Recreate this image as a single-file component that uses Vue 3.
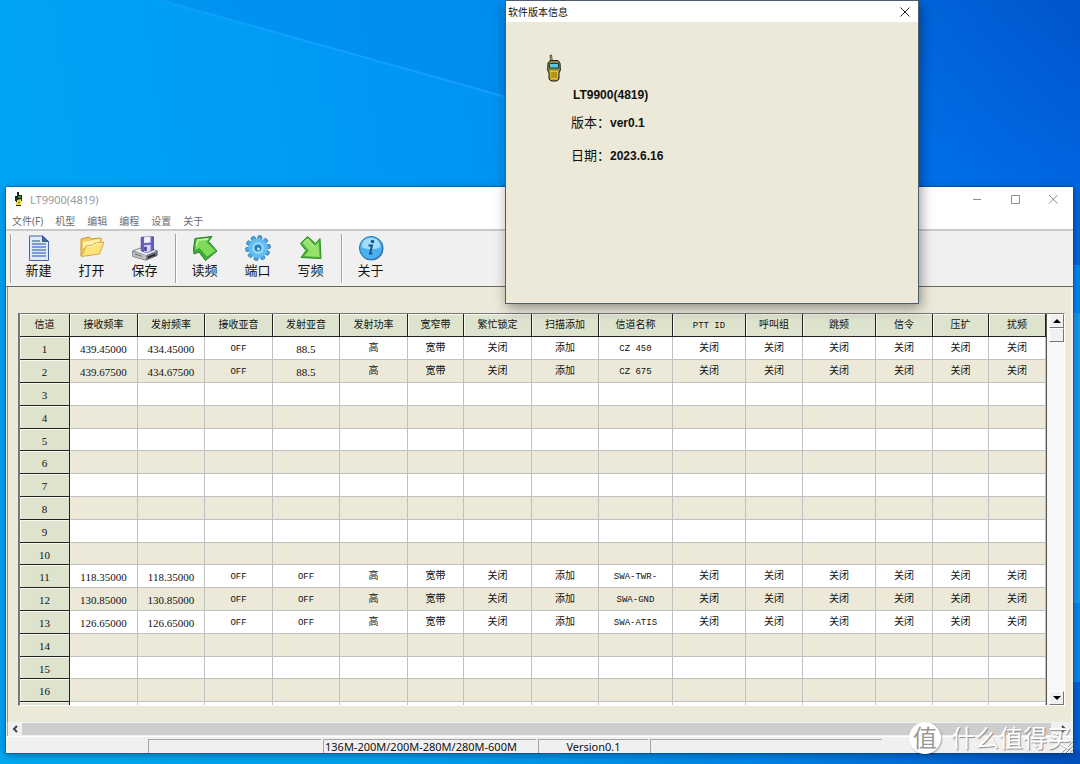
<script setup>
const menus = ['文件(F)', '机型', '编辑', '编程', '设置', '关于']

const toolGroups = [
  [
    { id: 'new', label: '新建' },
    { id: 'open', label: '打开' },
    { id: 'save', label: '保存' }
  ],
  [
    { id: 'read', label: '读频' },
    { id: 'port', label: '端口' },
    { id: 'write', label: '写频' }
  ],
  [{ id: 'about', label: '关于' }]
]

const columns = [
  { title: '信道', w: 50 },
  { title: '接收频率', w: 68 },
  { title: '发射频率', w: 67 },
  { title: '接收亚音', w: 68 },
  { title: '发射亚音', w: 67 },
  { title: '发射功率', w: 68 },
  { title: '宽窄带', w: 56 },
  { title: '繁忙锁定', w: 68 },
  { title: '扫描添加', w: 67 },
  { title: '信道名称', w: 74 },
  { title: 'PTT ID', w: 73 },
  { title: '呼叫组', w: 57 },
  { title: '跳频', w: 73 },
  { title: '信令', w: 57 },
  { title: '压扩', w: 56 },
  { title: '扰频', w: 57 }
]
const totalWidth = columns.reduce((sum, c) => sum + c.w, 0)

const channel = (rx, tx, rxTone, txTone, name) => [
  rx, tx, rxTone, txTone, '高', '宽带', '关闭', '添加', name,
  '关闭', '关闭', '关闭', '关闭', '关闭', '关闭'
]
const channels = {
  1: channel('439.45000', '434.45000', 'OFF', '88.5', 'CZ 450'),
  2: channel('439.67500', '434.67500', 'OFF', '88.5', 'CZ 675'),
  11: channel('118.35000', '118.35000', 'OFF', 'OFF', 'SWA-TWR-'),
  12: channel('130.85000', '130.85000', 'OFF', 'OFF', 'SWA-GND'),
  13: channel('126.65000', '126.65000', 'OFF', 'OFF', 'SWA-ATIS')
}
const emptyRow = Array(15).fill('')
const rows = Array.from({ length: 16 }, (_, i) => ({
  no: i + 1,
  cells: channels[i + 1] || emptyRow
}))

const textKind = (text) => {
  if (/^[\d.]+$/.test(text)) return 'numeric'
  return /^[\x20-\x7e]+$/.test(text) ? 'latin' : null
}

const teeth = Array.from({ length: 10 }, (_, i) => i * 36 + 10)
</script>

<template>
  <div class="desktop">
    <svg class="wallpaper" viewBox="0 0 1080 764" preserveAspectRatio="none" aria-hidden="true">
      <defs>
        <linearGradient id="sky" x1="0" y1="0.1" x2="1" y2="0">
          <stop offset="0" stop-color="#00a4f6" />
          <stop offset="0.45" stop-color="#0094f4" />
          <stop offset="0.75" stop-color="#006fe4" />
          <stop offset="1" stop-color="#0054cc" />
        </linearGradient>
        <linearGradient id="glow" x1="0" y1="0" x2="0" y2="1">
          <stop offset="0" stop-color="#0080ff" stop-opacity="0" />
          <stop offset="1" stop-color="#0080ff" stop-opacity="0.6" />
        </linearGradient>
        <linearGradient id="ray" x1="160" y1="0" x2="506" y2="97" gradientUnits="userSpaceOnUse">
          <stop offset="0" stop-color="#12a6ff" stop-opacity="0.5" />
          <stop offset="0.5" stop-color="#12a0ff" />
          <stop offset="1" stop-color="#159cff" />
        </linearGradient>
        <linearGradient id="floor" x1="0" y1="0" x2="1" y2="0">
          <stop offset="0" stop-color="#00aaf2" />
          <stop offset="0.35" stop-color="#00a2ee" />
          <stop offset="0.7" stop-color="#0086e6" />
          <stop offset="0.9" stop-color="#0064d2" />
          <stop offset="1" stop-color="#0050bc" />
        </linearGradient>
      </defs>
      <rect width="1080" height="764" fill="url(#sky)" />
      <rect x="600" width="480" height="190" fill="url(#glow)" opacity="0.6" />
      <path d="M160 0L506 97V0Z" fill="#0070e0" opacity="0.22" />
      <path d="M160 0L506 97" stroke="url(#ray)" stroke-width="2" fill="none" />
      <rect x="1060" y="190" width="20" height="75" fill="#0064dc" />
      <rect x="1060" y="265" width="20" height="48" fill="#0084ee" />
      <rect x="1060" y="313" width="20" height="290" fill="#1c98ee" />
      <rect x="1060" y="603" width="20" height="79" fill="#0c86e4" />
      <rect x="1060" y="682" width="20" height="82" fill="#0062d0" />
      <rect y="750" width="1080" height="14" fill="url(#floor)" />
    </svg>

    <main class="window">
      <header class="titlebar">
        <svg class="app-icon" viewBox="0 0 10 14" aria-hidden="true">
          <path d="M3 0h2v3h3v6h-1v5H2V9H1V4h2Z" fill="#17261a" />
          <path d="M4 4h3v2H4Z" fill="#3c8a5c" />
          <path d="M3 8l4-1v6H2v-3h1Z" fill="#e8dc4c" />
          <path d="M4 10h2v1H4Z" fill="#7c7420" />
        </svg>
        <h1>LT9900(4819)</h1>
        <div class="window-buttons">
          <button type="button" aria-label="最小化"><svg viewBox="0 0 10 10"><path d="M1 5.500h8" /></svg></button>
          <button type="button" aria-label="最大化"><svg viewBox="0 0 10 10"><path d="M1.500 1.500h8v8h-8Z" /></svg></button>
          <button type="button" aria-label="关闭窗口"><svg viewBox="0 0 10 10"><path d="M1 1l8.500 8.500M9.500 1L1 9.500" /></svg></button>
        </div>
      </header>

      <nav class="menubar">
        <button v-for="m in menus" :key="m" type="button">{{ m }}</button>
      </nav>

      <div class="toolbar">
        <div v-for="(group, g) in toolGroups" :key="g" class="tool-group">
          <button v-for="t in group" :key="t.id" type="button" class="tool">
            <svg v-if="t.id === 'new'" viewBox="0 0 26 26" aria-hidden="true">
              <path d="M3.500 1h13l6 5.500V25.500h-19Z" fill="#dfeaf9" stroke="#4866a0" />
              <path d="M16.500 1v5.500h6Z" fill="#3f67ac" stroke="#34599a" />
              <path d="M6 6h8M6 9h14M6 12h14M6 15h14M6 18h14M6 21h14" stroke="#5d83c2" stroke-width="1.500" />
            </svg>
            <svg v-else-if="t.id === 'open'" viewBox="0 0 26 26" aria-hidden="true">
              <path d="M2 21V4l8-2 2 2 10-1v7Z" fill="#f4cb58" stroke="#cc9b2e" />
              <path d="M4 7l17-3v9H4Z" fill="#fff3ae" />
              <path d="M2.500 21.500L7 11l7-1 2-2 9-1-4.500 12Z" fill="#ffe37a" stroke="#d8a63a" />
              <path d="M8 12l7-1 2-2 6-.7" stroke="#fff8cd" fill="none" />
            </svg>
            <svg v-else-if="t.id === 'save'" viewBox="0 0 28 26" aria-hidden="true">
              <path d="M1 16l12-4 14 4v5l-12 5L1 22Z" fill="#777b83" stroke="#4b4e55" />
              <path d="M1 16l12-4 14 4-12 5Z" fill="#e9ebee" stroke="#83878e" stroke-width=".6" />
              <path d="M1 17l14 4v5L1 22Z" fill="#bfc3c9" />
              <path d="M17 22l8-3v2l-8 3Z" fill="#25272b" />
              <path d="M3 19l8 2.500v1L3 20Z" fill="#5d6067" />
              <path d="M10 1.500L23 1v14l-7 3-6-2Z" fill="#6a60c3" stroke="#4a429c" />
              <path d="M13 1.500L20 1v6l-7 .5Z" fill="#f3f2fa" />
              <path d="M13 10l7-.5V16l-4 2-3-1Z" fill="#d9d8f5" />
              <path d="M13 12l3-.5v5L13 16Z" fill="#4f46a6" />
            </svg>
            <svg v-else-if="t.id === 'read'" viewBox="0 0 26 26" aria-hidden="true">
              <path d="M3 3.500L20 1.500l-3.500 5 8.500 9.500L13.500 25.500 7 17 2 19 1.500 14Z" fill="#3dad36" stroke="#238325" stroke-linejoin="round" />
              <path d="M4.500 4.500L18 3l-3.500 4L23.500 16 15 21.500 7.500 13 3 15Z" fill="#7fdb5c" />
              <path d="M4 11l2-6 10-1" stroke="#c8f7ae" fill="none" stroke-width="1.500" />
            </svg>
            <svg v-else-if="t.id === 'port'" viewBox="0 0 26 26" aria-hidden="true">
              <rect v-for="a in teeth" :key="a" x="11" y=".6" width="4" height="6" rx="1" fill="#4da6df" stroke="#287ab8" stroke-width=".8" :transform="`rotate(${a} 13 13)`" />
              <circle cx="13" cy="13" r="9.500" fill="#62bdf0" />
              <circle cx="13" cy="13" r="6.500" fill="#8bd6fa" stroke="#6bbcec" />
              <circle cx="13" cy="13" r="3" fill="#2c83c2" stroke="#2168a8" />
              <circle cx="13.500" cy="14" r="1.500" fill="#bfe8fb" />
            </svg>
            <svg v-else-if="t.id === 'write'" viewBox="0 0 26 26" aria-hidden="true">
              <path d="M9.500 1.500L2.500 8.500l5.500 7L3 22.500l20 1L22 3.500l-4.500 5Z" fill="#4ab735" stroke="#2c8a27" stroke-linejoin="round" />
              <path d="M9.500 3.500L5 8.500l6 7L6.500 21l15 1L20.500 7 17 11Z" fill="#94e26c" />
              <path d="M5 8.500L9.500 4l7 8" stroke="#cdf6ab" fill="none" />
            </svg>
            <svg v-else viewBox="0 0 26 26" aria-hidden="true">
              <circle cx="13.500" cy="13.500" r="12" fill="#386d9f" />
              <circle cx="13" cy="13" r="11.500" fill="#4bb0ed" stroke="#287cba" />
              <path d="M3.500 12a9.500 9.500 0 0 1 19 0c-5 3-14 3-19 0Z" fill="#a4dcf9" />
              <circle cx="14.500" cy="6.500" r="1.800" fill="#15558f" />
              <path d="M10.500 10.500h3.500l-2 8h2.500" stroke="#15558f" stroke-width="2" fill="none" />
            </svg>
            <span>{{ t.label }}</span>
          </button>
        </div>
      </div>

      <section class="workspace">
        <div class="grid-frame">
          <div class="grid-view">
            <table>
              <colgroup>
                <col v-for="c in columns" :key="c.title" :style="{ width: (c.w / totalWidth) * 100 + '%' }" />
              </colgroup>
              <thead>
                <tr>
                  <th v-for="c in columns" :key="c.title" scope="col" :class="textKind(c.title)">{{ c.title }}</th>
                </tr>
              </thead>
              <tbody>
                <tr v-for="r in rows" :key="r.no">
                  <th scope="row" class="numeric">{{ r.no }}</th>
                  <td v-for="(cell, i) in r.cells" :key="i" :class="textKind(cell)">{{ cell }}</td>
                </tr>
                <tr aria-hidden="true">
                  <th></th>
                  <td v-for="(cell, i) in emptyRow" :key="i"></td>
                </tr>
              </tbody>
            </table>
          </div>
          <div class="vscroll">
            <button type="button" aria-label="向上滚动"><svg viewBox="0 0 8 5"><path d="M4 0l4 4H0Z" /></svg></button>
            <div class="vthumb"></div>
            <button type="button" class="down" aria-label="向下滚动"><svg viewBox="0 0 8 5"><path d="M0 0h8L4 4Z" /></svg></button>
          </div>
        </div>
      </section>

      <div class="hscroll">
        <button type="button" aria-label="向左滚动"><svg viewBox="0 0 6 8"><path d="M5 1L2 4l3 3" /></svg></button>
        <div class="hthumb"></div>
        <button type="button" aria-label="向右滚动"><svg viewBox="0 0 6 8"><path d="M1 1l3 3-3 3" /></svg></button>
      </div>

      <footer class="statusbar">
        <div class="pane blank"></div>
        <div class="pane wide"></div>
        <div class="pane bands">136M-200M/200M-280M/280M-600M</div>
        <div class="pane version">Version0.1</div>
        <div class="pane rest"></div>
        <svg class="grip" viewBox="0 0 12 12" aria-hidden="true"><path d="M1 12L12 1M5 12l7-7M9 12l3-3" /></svg>
      </footer>
    </main>

    <section class="dialog" role="dialog" aria-labelledby="dialog-title">
      <header>
        <h2 id="dialog-title">软件版本信息</h2>
        <button type="button" aria-label="关闭"><svg viewBox="0 0 10 10"><path d="M.5.5l9 9M9.500.5l-9 9" /></svg></button>
      </header>
      <div class="dialog-body">
        <svg class="radio" viewBox="0 0 14 28" aria-hidden="true">
          <path d="M3 1h1.500l1 7H3.500Z" fill="#b9ad72" stroke="#3b3520" stroke-width=".7" />
          <path d="M1 9l2-2.500h8L13 9l.4 7-1.400 3v6l-2 2H4l-2-2v-6L.6 16Z" fill="#8c8440" stroke="#26230f" />
          <path d="M2.500 9.500h9v4.500h-9Z" fill="#62c8d8" stroke="#154450" />
          <path d="M2.800 16.500h8.500l-.6 9H3.500Z" fill="#e6c62c" />
          <path d="M5 18v6M7 18v6M9 18v6" stroke="#6b5208" stroke-width=".9" />
        </svg>
        <div class="info">
          <p class="model"><b>LT9900(4819)</b></p>
          <p>版本：<b>ver0.1</b></p>
          <p>日期：<b>2023.6.16</b></p>
        </div>
      </div>
    </section>

    <div class="watermark"><span class="badge">值</span><span>什么值得买</span></div>
  </div>
</template>

<style>
body {
  margin: 0;
}
</style>

<style scoped>
.desktop {
  position: relative;
  min-height: 100vh;
  overflow: hidden;
  font-family: "Noto Sans", "Noto Sans CJK SC", sans-serif;
  font-size: 10px;
  color: #111;
}
.wallpaper {
  position: absolute;
  inset: 0;
  width: 100%;
  height: 100%;
}
button {
  padding: 0;
  border: 0;
  background: none;
  font: inherit;
  color: inherit;
}
h1,
h2,
p {
  margin: 0;
  font-weight: normal;
}

.window {
  position: absolute;
  inset: 187px 7px 11px 6px;
  display: flex;
  flex-direction: column;
  background: #f0f0f0;
  box-shadow: 0 0 0 1px rgba(0, 60, 110, 0.35), 0 2px 8px rgba(0, 20, 60, 0.45);
}
.titlebar {
  display: flex;
  align-items: center;
  gap: 6px;
  height: 24px;
  padding: 0 15px 0 8px;
  background: #fff;
}
.app-icon {
  width: 10px;
  height: 14px;
}
h1 {
  font-size: 11px;
  color: #999;
}
.window-buttons {
  display: flex;
  gap: 28px;
  margin-left: auto;
}
.window-buttons svg {
  display: block;
  width: 10px;
  height: 10px;
  fill: none;
  stroke: #8c8c8c;
}
.menubar {
  display: flex;
  gap: 12px;
  height: 18px;
  padding-left: 6px;
  background: #fff;
  border-bottom: 2px solid #c9c9c9;
  line-height: 20px;
  color: #6d6d6d;
}
.toolbar {
  display: flex;
  height: 49px;
  padding: 3px 4px;
  border-bottom: 1px solid #686868;
}
.tool-group {
  display: flex;
  padding: 0 4px 0 2px;
  border-left: 1px solid #a3a3a3;
  box-shadow: inset 1px 0 #fff;
}
.tool-group:first-child {
  padding-left: 1px;
}
.tool {
  display: flex;
  flex-direction: column;
  align-items: center;
  width: 53px;
  padding-top: 1px;
  font-size: 13px;
  line-height: 18px;
}
.tool svg {
  width: 26px;
  height: 26px;
}

.workspace {
  display: flex;
  flex: 1;
  min-height: 0;
  margin: 0 2px 0 1px;
  padding: 26px 6px 16px 10px;
  border-left: 1px solid #8a8a8a;
  background: #ece9d8;
}
.grid-frame {
  display: flex;
  flex: 1;
  min-width: 0;
  border: 1px solid #777;
  border-left-width: 2px;
  border-right-color: #fff;
  border-bottom-color: #fff;
  background: #f8f8f6;
}
.grid-view {
  flex: 1;
  min-width: 0;
  overflow: hidden;
  border-right: 1px solid #555;
}
table {
  width: 100%;
  table-layout: fixed;
  border-collapse: separate;
  border-spacing: 0;
  font-family: "Liberation Mono", "Noto Sans CJK SC", monospace;
  line-height: 14px;
}
th,
td {
  box-sizing: border-box;
  height: 23px;
  padding: 2px 0 0;
  font-weight: normal;
  text-align: center;
  white-space: nowrap;
}
.latin {
  font-size: 9px;
}
.numeric {
  font-family: "Liberation Serif", serif;
  font-size: 11px;
}
tbody tr:nth-child(5n) > * {
  height: 22px;
}
th {
  border-right: 1px solid #222;
  border-bottom: 1px solid #222;
  box-shadow: inset 1px 1px #f6f8ee;
  background: #dee3cd;
}
td {
  border-right: 1px solid #c0c0c0;
  border-bottom: 1px solid #c0c0c0;
  background: #fff;
}
tbody tr:nth-child(even) td {
  background: #ece9d8;
}
.vscroll {
  display: flex;
  flex-direction: column;
  width: 15px;
  margin-left: 2px;
  background: #f7f7f8;
}
.vscroll button,
.vthumb {
  box-sizing: border-box;
  display: grid;
  place-items: center;
  height: 14px;
  border: 1px solid #fff;
  border-right-color: #777;
  border-bottom-color: #777;
  background: #f0f0f0;
}
.vscroll .down {
  margin-top: auto;
}
.vscroll svg {
  width: 8px;
  height: 5px;
}
.hscroll {
  display: flex;
  height: 14px;
  margin: 0 2px 0 1px;
  border-left: 1px solid #aaa;
}
.hscroll button {
  display: grid;
  place-items: center;
  width: 14px;
}
.hscroll svg {
  width: 6px;
  height: 8px;
  fill: none;
  stroke: #444;
  stroke-width: 2;
}
.hthumb {
  flex: 1;
  margin: 1px 6px 1px 0;
  background: #cdcdcd;
}
.statusbar {
  display: flex;
  gap: 2px;
  height: 14px;
  padding-top: 2px;
  border-top: 1px solid #fff;
  font-size: 11px;
  line-height: 14px;
  white-space: nowrap;
}
.pane {
  box-sizing: border-box;
  border: solid #a5a5a5;
  border-width: 1px 0 0 1px;
}
.blank {
  width: 140px;
  border-color: transparent;
}
.wide {
  width: 173px;
}
.bands {
  width: 213px;
  padding-left: 1px;
}
.version {
  width: 110px;
  text-align: center;
}
.rest {
  width: 232px;
}
.grip {
  width: 12px;
  height: 12px;
  margin: auto 0 0 auto;
  fill: none;
  stroke: #999;
}

.dialog {
  position: absolute;
  top: 0;
  left: 505px;
  box-sizing: border-box;
  width: 414px;
  border: 1px solid #4d5d6b;
  background: #ece9d8;
  box-shadow: 2px 4px 12px rgba(0, 0, 0, 0.4);
}
.dialog header {
  display: flex;
  align-items: center;
  justify-content: space-between;
  height: 21px;
  padding: 0 8px 0 2px;
  background: #fff;
}
h2 {
  font-size: 10px;
}
.dialog header svg {
  display: block;
  width: 10px;
  height: 10px;
  fill: none;
  stroke: #222;
}
.dialog-body {
  min-height: 249px;
  padding: 32px 41px 0;
}
.radio {
  display: block;
  width: 14px;
  height: 28px;
}
.info {
  display: grid;
  gap: 12px;
  padding: 2px 0 0 24px;
  font-size: 13px;
  line-height: 20px;
}
.info b {
  font-family: "Liberation Sans", sans-serif;
  font-size: 12px;
}
.info .model {
  height: 16px;
  padding-left: 2px;
}

.watermark {
  position: absolute;
  right: 9px;
  bottom: 10px;
  display: flex;
  align-items: center;
  gap: 10px;
  font-size: 24px;
  line-height: 32px;
  color: #fff;
  text-shadow: 1px 1px 1px #888;
}
.badge {
  width: 32px;
  border-radius: 50%;
  background: #fff;
  box-shadow: 1px 1px 2px rgba(0, 0, 0, 0.3);
  color: #999;
  text-align: center;
  text-shadow: none;
}
</style>
